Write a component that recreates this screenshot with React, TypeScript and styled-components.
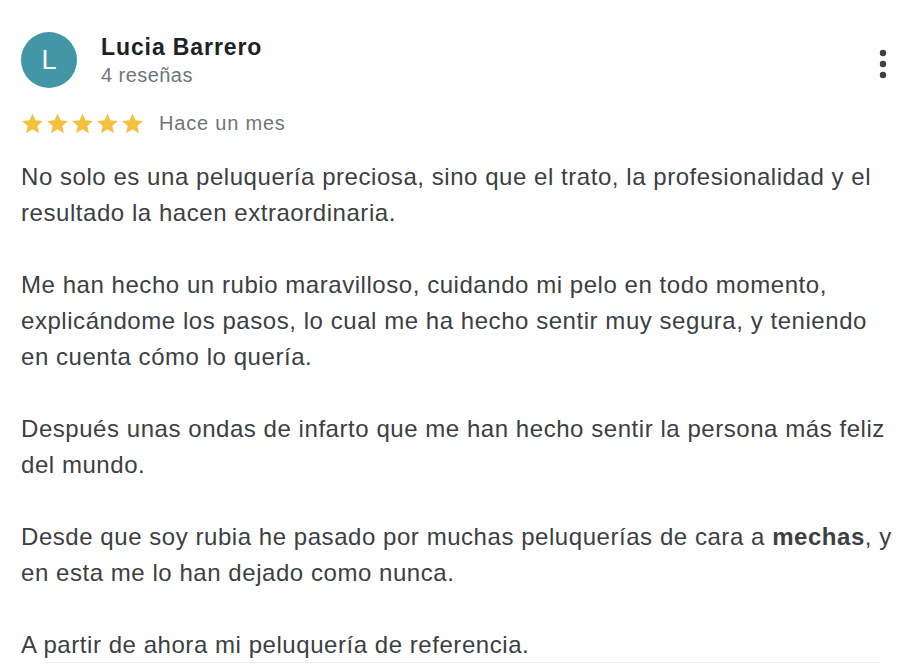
import React from "react";
import styled, { createGlobalStyle } from "styled-components";

const Global = createGlobalStyle`
  html, body { margin: 0; padding: 0; background: #ffffff; }
  body { font-family: "Liberation Sans", Arial, Helvetica, sans-serif; }
`;

const Card = styled.article`
  width: 914px;
  height: 664px;
  box-sizing: border-box;
  padding: 32px 0 0 21px;
  overflow: hidden;
  position: relative;
`;

const Header = styled.header`
  display: flex;
  align-items: flex-start;
  gap: 24px;
`;

const Avatar = styled.div`
  width: 56px;
  height: 56px;
  border-radius: 50%;
  background: #4396a6;
  color: #ffffff;
  display: flex;
  align-items: center;
  justify-content: center;
  font-size: 27px;
  font-weight: 400;
  flex-shrink: 0;
`;

const Who = styled.div`
  display: flex;
  flex-direction: column;
  flex: 1;
`;

const Name = styled.div`
  font-size: 23px;
  font-weight: 700;
  letter-spacing: 0.9px;
  line-height: 28px;
  color: #202124;
  margin-top: 1px;
`;

const Meta = styled.div`
  font-size: 20px;
  letter-spacing: 0.45px;
  line-height: 28px;
  color: #70757a;
`;

const MoreButton = styled.button`
  border: 0;
  background: transparent;
  padding: 0;
  width: 24px;
  height: 40px;
  margin: 12px 19px 0 0;
  display: flex;
  align-items: center;
  justify-content: center;
  cursor: pointer;
`;

const RatingRow = styled.div`
  display: flex;
  align-items: center;
  gap: 15px;
  margin-top: 22px;
  height: 24px;
`;

const Stars = styled.div`
  display: flex;
  gap: 2px;
`;

const When = styled.span`
  font-size: 20px;
  letter-spacing: 0.8px;
  color: #70757a;
  line-height: 24px;
`;

const Body = styled.div`
  margin-top: 24px;
  font-size: 24px;
  letter-spacing: 0.55px;
  line-height: 36px;
  color: #3c4043;
  width: 875px;
`;

const Para = styled.p`
  margin: 0 0 36px 0;
  &:last-child { margin-bottom: 0; }
`;

const Strong = styled.b`
  font-weight: 700;
  color: #3c4043;
`;

const Divider = styled.div`
  position: absolute;
  left: 45px;
  right: 34px;
  bottom: 1px;
  height: 1px;
  background: #f1f1f1;
`;

const Star = () => (
  <svg width="23" height="23" viewBox="0 0 24 24">
    <path
      d="M12 1.6l3.1 7.1 7.7.7-5.8 5.1 1.7 7.6L12 18.1l-6.7 4 1.7-7.6-5.8-5.1 7.7-.7z"
      fill="#f4c13f"
    />
  </svg>
);

const Dots = () => (
  <svg width="8" height="30" viewBox="0 0 8 30">
    <circle cx="4" cy="4" r="3.2" fill="#3f3f3f" />
    <circle cx="4" cy="15" r="3.2" fill="#3f3f3f" />
    <circle cx="4" cy="26" r="3.2" fill="#3f3f3f" />
  </svg>
);

export default function App() {
  return (
    <>
      <Global />
      <Card>
        <Header>
          <Avatar>L</Avatar>
          <Who>
            <Name>Lucia Barrero</Name>
            <Meta>4 reseñas</Meta>
          </Who>
          <MoreButton aria-label="Más opciones">
            <Dots />
          </MoreButton>
        </Header>
        <RatingRow>
          <Stars>
            {[0, 1, 2, 3, 4].map((i) => (
              <Star key={i} />
            ))}
          </Stars>
          <When>Hace un mes</When>
        </RatingRow>
        <Body>
          <Para>
            No solo es una peluquería preciosa, sino que el trato, la profesionalidad y el resultado la hacen extraordinaria.
          </Para>
          <Para>
            Me han hecho un rubio maravilloso, cuidando mi pelo en todo momento, explicándome los pasos, lo cual me ha hecho sentir muy segura, y teniendo en cuenta cómo lo quería.
          </Para>
          <Para>
            Después unas ondas de infarto que me han hecho sentir la persona más feliz del mundo.
          </Para>
          <Para>
            Desde que soy rubia he pasado por muchas peluquerías de cara a <Strong>mechas</Strong>, y en esta me lo han dejado como nunca.
          </Para>
          <Para>A partir de ahora mi peluquería de referencia.</Para>
        </Body>
        <Divider />
      </Card>
    </>
  );
}
